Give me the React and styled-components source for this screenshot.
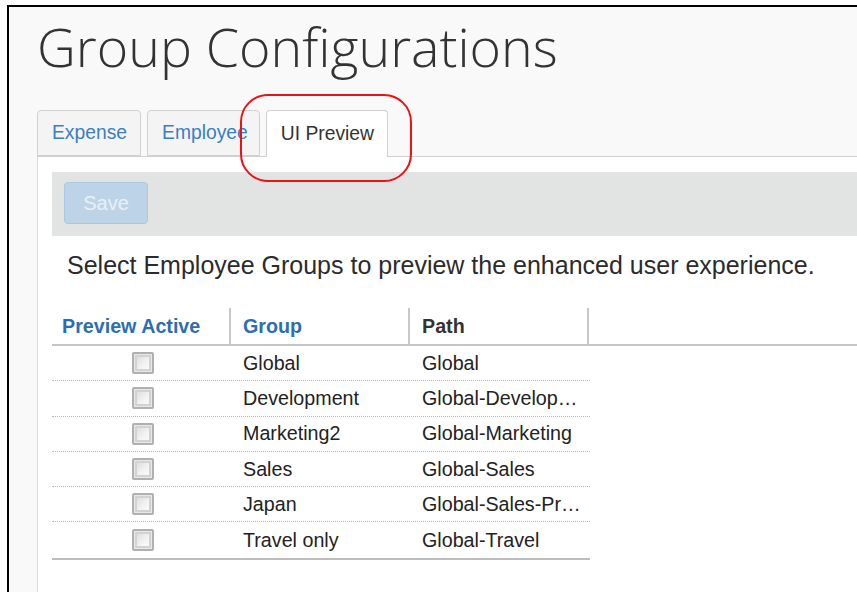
import React from "react";
import styled, { createGlobalStyle } from "styled-components";

const GlobalStyle = createGlobalStyle`
  html, body {
    margin: 0;
    padding: 0;
    background: #ffffff;
    overflow: hidden;
  }
  #root {
    width: 857px;
    height: 592px;
  }
`;

const Frame = styled.div`
  margin: 5px 0 0 7px;
  height: 587px;
  border-top: 2px solid #000;
  border-left: 2px solid #000;
  background: #f9f9f9;
  box-sizing: border-box;
  display: flex;
  flex-direction: column;
  font-family: Arial, "Liberation Sans", sans-serif;
`;

const Title = styled.h1`
  margin: 0;
  padding: 5px 0 0 28px;
  height: 103px;
  box-sizing: border-box;
  font-family: "Open Sans", sans-serif;
  font-weight: 300;
  font-size: 53.7px;
  line-height: 70px;
  color: #333;
`;

const TabBar = styled.div`
  position: relative;
  display: flex;
  gap: 6px;
  margin-left: 28px;
  height: 46px;
  border-bottom: 1px solid #cfcfcf;
`;

const Tab = styled.div`
  height: ${p => (p.$active ? "47px" : "46px")};
  box-sizing: border-box;
  padding: 0 ${p => p.$pr}px 0 14px;
  display: flex;
  align-items: center;
  border: 1px solid #d0d0d0;
  border-bottom: ${p => (p.$active ? "none" : "1px solid #d0d0d0")};
  border-radius: 4px 4px 0 0;
  background: ${p => (p.$active ? "#ffffff" : "#f4f4f4")};
  color: ${p => (p.$active ? "#333" : "#3b7ec3")};
  font-size: 19.3px;
  z-index: ${p => (p.$active ? 1 : 0)};
`;

const Highlight = styled.div`
  position: absolute;
  left: 203px;
  top: -16px;
  width: 172px;
  height: 88px;
  border: 2px solid #ee1111;
  border-radius: 28px;
  box-sizing: border-box;
  pointer-events: none;
  z-index: 2;
`;

const Panel = styled.div`
  flex: 1;
  margin-left: 28px;
  background: #ffffff;
  border-left: 1px solid #d9d9d9;
  padding: 15px 0 0 14px;
`;

const Toolbar = styled.div`
  background: #e2e3e3;
  height: 64px;
  box-sizing: border-box;
  padding: 10px 12px;
  display: flex;
  align-items: flex-start;
`;

const SaveButton = styled.button`
  width: 84px;
  height: 42px;
  border: 1px solid #a9c8e4;
  border-radius: 4px;
  background: #bdd4e8;
  color: #e8f0f7;
  font-family: Arial, "Liberation Sans", sans-serif;
  font-size: 20px;
  padding: 0;
`;

const Intro = styled.p`
  margin: 0;
  padding: 15px 0 0 15px;
  height: 72px;
  box-sizing: border-box;
  font-size: 25px;
  line-height: 28px;
  color: #2b2b2b;
`;

const HeaderRow = styled.div`
  display: flex;
  height: 36px;
  border-bottom: 2px solid #c4c4c4;
`;

const HeadCell = styled.div`
  width: 179px;
  box-sizing: border-box;
  padding-left: ${p => (p.$first ? "10px" : "12px")};
  border-right: 2px solid #c8c8c8;
  display: flex;
  align-items: center;
  font-size: 19.7px;
  font-weight: bold;
  color: ${p => (p.$link ? "#2d6db4" : "#333")};
`;

const Body = styled.div`
  width: 538px;
  border-bottom: 2px solid #bdbdbd;
`;

const Row = styled.div`
  display: flex;
  height: 35.3px;
  box-sizing: border-box;
  border-bottom: ${p => (p.$last ? "none" : "1px dotted #b5b5b5")};
`;

const Cell = styled.div`
  width: 179px;
  box-sizing: border-box;
  padding-left: 12px;
  display: flex;
  align-items: center;
  justify-content: ${p => (p.$center ? "center" : "flex-start")};
  font-size: 19.7px;
  color: #222;
  white-space: nowrap;
  overflow: hidden;
`;

const Checkbox = styled.span`
  width: 22px;
  height: 22px;
  box-sizing: border-box;
  border: 2px solid #b0b0b0;
  border-radius: 2px;
  background: linear-gradient(135deg, #d6d6d6 0%, #f2f2f2 55%, #ffffff 100%);
  box-shadow: inset 0 0 0 1px #e8e8e8, inset 0 0 0 3px #d2d2d2;
  margin-left: -10px;
`;

const groups = [
  { name: "Global", path: "Global" },
  { name: "Development", path: "Global-Develop…" },
  { name: "Marketing2", path: "Global-Marketing" },
  { name: "Sales", path: "Global-Sales" },
  { name: "Japan", path: "Global-Sales-Pr…" },
  { name: "Travel only", path: "Global-Travel" },
];

export default function App() {
  return (
    <>
      <GlobalStyle />
      <Frame>
        <Title>Group Configurations</Title>
        <TabBar>
          <Tab $pr={13}>Expense</Tab>
          <Tab $pr={11}>Employee</Tab>
          <Tab $active $pr={13}>UI Preview</Tab>
          <Highlight />
        </TabBar>
        <Panel>
          <Toolbar>
            <SaveButton disabled>Save</SaveButton>
          </Toolbar>
          <Intro>Select Employee Groups to preview the enhanced user experience.</Intro>
          <HeaderRow>
            <HeadCell $first $link>Preview Active</HeadCell>
            <HeadCell $link>Group</HeadCell>
            <HeadCell>Path</HeadCell>
          </HeaderRow>
          <Body>
            {groups.map((g, i) => (
              <Row key={g.name} $last={i === groups.length - 1}>
                <Cell $center>
                  <Checkbox />
                </Cell>
                <Cell>{g.name}</Cell>
                <Cell>{g.path}</Cell>
              </Row>
            ))}
          </Body>
        </Panel>
      </Frame>
    </>
  );
}
